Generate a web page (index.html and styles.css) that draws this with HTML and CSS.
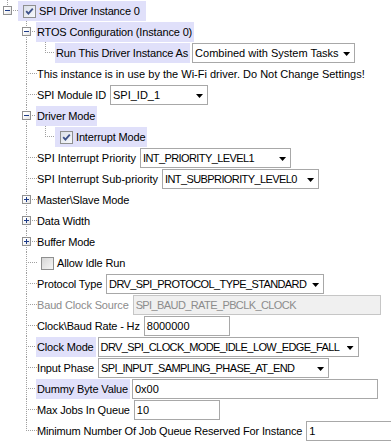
FILE: index.html
```html
<!DOCTYPE html>
<html>
<head>
<meta charset="utf-8">
<link rel="stylesheet" href="styles.css">
</head>
<body>
<div class="tree">
  <div class="row">
    <span class="cell re"><span class="exp minus"></span></span>
    <span class="item sel root"><span class="chk on"><svg viewBox="0 0 11 11" width="11" height="11"><path d="M2.2 5.2 L4.4 7.6 L8.8 2.6" fill="none" stroke="#3d5189" stroke-width="1.8"/></svg></span>SPI Driver Instance 0</span>
  </div>
  <div class="row">
    <span class="cell"></span><span class="cell e"><span class="exp minus"></span></span>
    <span class="item sel">RTOS Configuration (Instance 0)</span>
  </div>
  <div class="row">
    <span class="cell"></span><span class="cell v"></span><span class="cell l"></span>
    <span class="item sel">Run This Driver Instance As</span>
    <span class="combo w-run">Combined with System Tasks</span>
  </div>
  <div class="row">
    <span class="cell"></span><span class="cell t"></span>
    <span class="item info">This instance is in use by the Wi-Fi driver. Do Not Change Settings!</span>
  </div>
  <div class="row">
    <span class="cell"></span><span class="cell t"></span>
    <span class="item">SPI Module ID</span>
    <span class="combo w-module">SPI_ID_1</span>
  </div>
  <div class="row">
    <span class="cell"></span><span class="cell e"><span class="exp minus"></span></span>
    <span class="item sel">Driver Mode</span>
  </div>
  <div class="row">
    <span class="cell"></span><span class="cell v"></span><span class="cell l"></span>
    <span class="item sel"><span class="chk on"><svg viewBox="0 0 11 11" width="11" height="11"><path d="M2.2 5.2 L4.4 7.6 L8.8 2.6" fill="none" stroke="#3d5189" stroke-width="1.8"/></svg></span>Interrupt Mode</span>
  </div>
  <div class="row">
    <span class="cell"></span><span class="cell t"></span>
    <span class="item wide">SPI Interrupt Priority</span>
    <span class="combo caps w-prio">INT_PRIORITY_LEVEL1</span>
  </div>
  <div class="row">
    <span class="cell"></span><span class="cell t"></span>
    <span class="item wide">SPI Interrupt Sub-priority</span>
    <span class="combo caps w-subprio">INT_SUBPRIORITY_LEVEL0</span>
  </div>
  <div class="row">
    <span class="cell"></span><span class="cell e"><span class="exp plus"></span></span>
    <span class="item">Master\Slave Mode</span>
  </div>
  <div class="row">
    <span class="cell"></span><span class="cell e"><span class="exp plus"></span></span>
    <span class="item">Data Width</span>
  </div>
  <div class="row">
    <span class="cell"></span><span class="cell e"><span class="exp plus"></span></span>
    <span class="item">Buffer Mode</span>
  </div>
  <div class="row">
    <span class="cell"></span><span class="cell t"></span>
    <span class="item"><span class="chk"></span>Allow Idle Run</span>
  </div>
  <div class="row">
    <span class="cell"></span><span class="cell t"></span>
    <span class="item">Protocol Type</span>
    <span class="combo caps w-proto">DRV_SPI_PROTOCOL_TYPE_STANDARD</span>
  </div>
  <div class="row">
    <span class="cell"></span><span class="cell t"></span>
    <span class="item dis">Baud Clock Source</span>
    <span class="field caps dis w-baud">SPI_BAUD_RATE_PBCLK_CLOCK</span>
  </div>
  <div class="row">
    <span class="cell"></span><span class="cell t"></span>
    <span class="item">Clock\Baud Rate - Hz</span>
    <span class="field w-num">8000000</span>
  </div>
  <div class="row">
    <span class="cell"></span><span class="cell t"></span>
    <span class="item sel">Clock Mode</span>
    <span class="combo caps w-clk">DRV_SPI_CLOCK_MODE_IDLE_LOW_EDGE_FALL</span>
  </div>
  <div class="row">
    <span class="cell"></span><span class="cell t"></span>
    <span class="item">Input Phase</span>
    <span class="combo caps w-phase">SPI_INPUT_SAMPLING_PHASE_AT_END</span>
  </div>
  <div class="row">
    <span class="cell"></span><span class="cell t"></span>
    <span class="item sel">Dummy Byte Value</span>
    <span class="field w-dummy">0x00</span>
  </div>
  <div class="row">
    <span class="cell"></span><span class="cell t"></span>
    <span class="item">Max Jobs In Queue</span>
    <span class="field w-num">10</span>
  </div>
  <div class="row">
    <span class="cell"></span><span class="cell l"></span>
    <span class="item">Minimum Number Of Job Queue Reserved For Instance</span>
    <span class="field w-min">1</span>
  </div>
</div>
</body>
</html>
```

FILE: styles.css
```css
* { box-sizing: border-box; }
html, body { margin: 0; padding: 0; background: #fff; }
body {
  font-family: "Liberation Sans", Arial, sans-serif;
  font-size: 11px;
  color: #000;
  width: 391px;
  height: 442px;
  overflow: hidden;
}
.tree { display: flex; flex-direction: column; }
.row {
  display: flex;
  align-items: flex-start;
  height: 21px;
  white-space: nowrap;
}
.cell {
  flex: none;
  width: 19px;
  height: 21px;
  position: relative;
}
.v::before, .t::before, .e::before, .l::before, .re::before {
  content: "";
  position: absolute;
  left: 7px;
  top: 0;
  width: 1px;
  height: 21px;
  background: repeating-linear-gradient(to bottom, #a0a0a0 0 1px, transparent 1px 2px);
}
.l::before, .re::before { height: 11px; }
.t::after, .l::after, .e::after, .re::after {
  content: "";
  position: absolute;
  left: 8px;
  top: 10px;
  width: 10px;
  height: 1px;
  background: repeating-linear-gradient(to right, transparent 0 1px, #a0a0a0 1px 2px);
}
.exp {
  position: absolute;
  left: 3px;
  top: 6px;
  width: 9px;
  height: 9px;
  border: 1px solid #919191;
  background: linear-gradient(135deg, #ffffff 30%, #e2e2e2);
  z-index: 1;
}
.exp::before {
  content: "";
  position: absolute;
  left: 1px;
  top: 3px;
  width: 5px;
  height: 1px;
  background: #1e3c88;
}
.exp.plus::after {
  content: "";
  position: absolute;
  left: 3px;
  top: 1px;
  width: 1px;
  height: 5px;
  background: #1e3c88;
}
.item {
  flex: none;
  display: flex;
  align-items: center;
  height: 20px;
  margin: 1px 0 0 -2px;
  padding: 0 2px 0 1px;
  position: relative;
  letter-spacing: -0.15px;
}
.item.info, .item.wide { letter-spacing: 0; }
.item.root { margin-left: -1px; padding-right: 6px; }
.item.sel { background: #e0e0fa; }
.item.dis { color: #8c8c8c; }
.chk {
  flex: none;
  width: 13px;
  height: 13px;
  margin: 0 3px 0 4px;
  border: 1px solid #8e8f8f;
  background: linear-gradient(135deg, #d6d6d6, #f6f6f6);
  display: flex;
  align-items: center;
  justify-content: center;
}
.chk.on { background: linear-gradient(135deg, #dadfe9, #f7f8fb); }
.chk svg { display: block; }
.combo, .field {
  flex: none;
  position: relative;
  height: 20px;
  margin: 1px 0 0 2px;
  padding: 0 0 0 2px;
  border: 1px solid #a8a8a8;
  background: #fff;
  line-height: 18px;
  overflow: hidden;
}
.caps { letter-spacing: -0.6px; }
.combo::after {
  content: "";
  position: absolute;
  right: 4px;
  top: 8px;
  width: 7px;
  height: 4px;
  background: #000;
  clip-path: polygon(0 0, 100% 0, 50% 100%);
}
.field.dis {
  background: #f0f0f0;
  border-color: #c6c6c6;
  color: #8c8c8c;
}
.w-run { width: 163px; }
.w-module { width: 98px; }
.w-prio { width: 151px; }
.w-subprio { width: 157px; }
.w-proto { width: 218px; }
.w-baud { width: 248px; }
.w-num { width: 86px; }
.w-clk { width: 261px; }
.w-phase { width: 231px; }
.w-dummy { width: 246px; }
.w-min { width: 87px; }
```
